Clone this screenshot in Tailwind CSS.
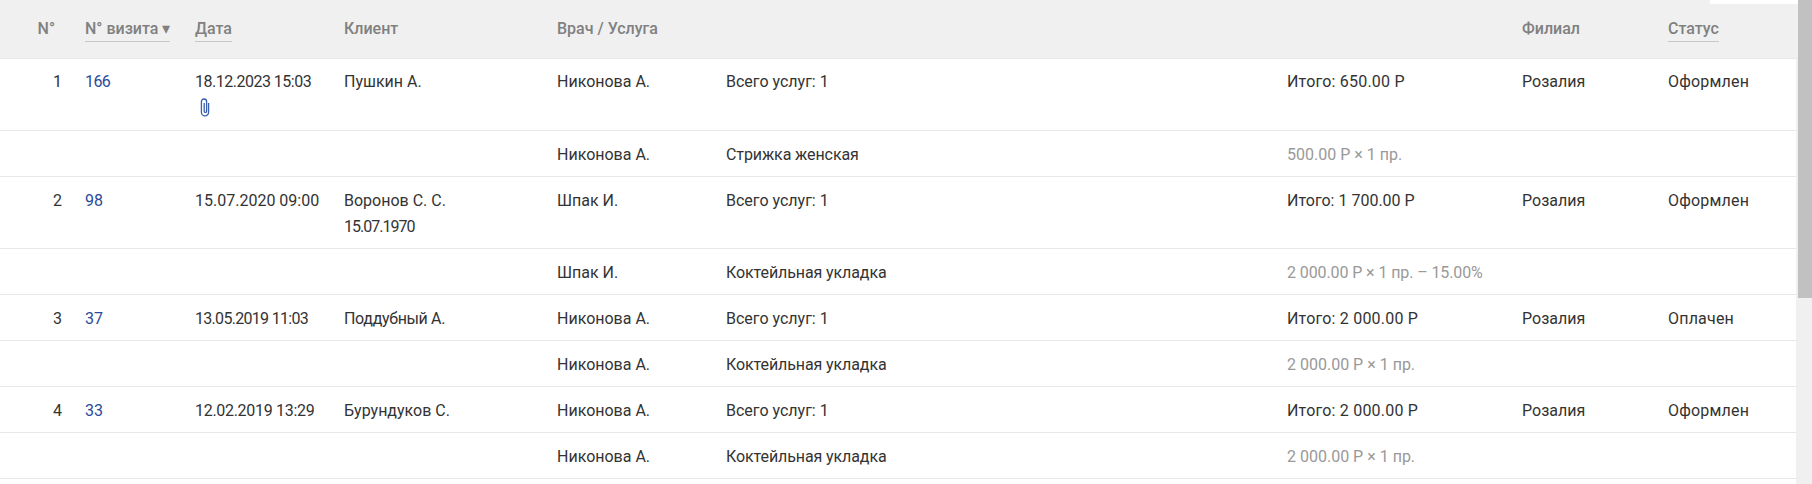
<!DOCTYPE html>
<html lang="ru">
<head>
    <meta charset="UTF-8">
    <title>Визиты</title>
    <script src="https://cdn.jsdelivr.net/npm/@tailwindcss/browser@4"></script>
</head>
<body class="bg-[#f0f0f0] h-[484px] overflow-hidden flex font-['Roboto',sans-serif] text-[16px] leading-[26px] text-[#333]">
    <div class="relative w-[1798px] shrink-0 pr-[2px]">
        <div class="absolute top-0 left-[1710px] w-[88px] h-1 bg-white"></div>
        <table class="w-full table-fixed border-collapse">
            <colgroup>
                <col class="w-[85px]">
                <col class="w-[110px]">
                <col class="w-[149px]">
                <col class="w-[213px]">
                <col class="w-[169px]">
                <col class="w-[561px]">
                <col class="w-[235px]">
                <col class="w-[146px]">
                <col>
            </colgroup>
            <thead class="text-[#808080]">
                <tr class="h-[58px] border-b border-[#e8e8e8]">
                    <th class="pr-[30px] text-right font-medium">N°</th>
                    <th class="text-left font-medium"><span class="border-b border-[#c8c8c8] pb-[3px]">N° визита ▾</span></th>
                    <th class="text-left font-medium"><span class="border-b border-[#c8c8c8] pb-[3px]">Дата</span></th>
                    <th class="text-left font-medium">Клиент</th>
                    <th class="text-left font-medium" colspan="3">Врач / Услуга</th>
                    <th class="text-left font-medium">Филиал</th>
                    <th class="text-left font-medium"><span class="border-b border-[#c8c8c8] pb-[3px]">Статус</span></th>
                </tr>
            </thead>
            <tbody class="bg-white">
                <tr class="h-[72px] border-b border-[#e8e8e8] align-top">
                    <td class="pt-[10px] pr-[23px] text-right">1</td>
                    <td class="pt-[10px] text-[#2a4a9a] tracking-[-0.6px]">166</td>
                    <td class="pt-[10px]">
                        <div class="tracking-[-0.5px]">18.12.2023 15:03</div>
                        <svg class="mt-[3px] ml-[4px]" width="12" height="19" viewBox="0 0 12 19" fill="none" stroke="#3a5fae" stroke-width="1.3"><path d="M9.6 5v9.2a3.6 3.6 0 0 1-7.2 0V3.6a2.6 2.6 0 0 1 5.2 0v9.6a1.2 1.2 0 0 1-2.4 0V5"/></svg>
                    </td>
                    <td class="pt-[10px]">Пушкин А.</td>
                    <td class="pt-[10px]">Никонова А.</td>
                    <td class="pt-[10px]">Всего услуг: 1</td>
                    <td class="pt-[10px] tracking-[0.2px]">Итого: 650.00 Р</td>
                    <td class="pt-[10px]">Розалия</td>
                    <td class="pt-[10px] tracking-[0.2px]">Оформлен</td>
                </tr>
                <tr class="h-[46px] border-b border-[#e8e8e8]">
                    <td colspan="4"></td>
                    <td class="pt-[4px]">Никонова А.</td>
                    <td class="pt-[4px] tracking-[-0.1px]">Стрижка женская</td>
                    <td class="pt-[4px] text-[#999]" colspan="3">500.00 Р × 1 пр.</td>
                </tr>
                <tr class="h-[72px] border-b border-[#e8e8e8] align-top">
                    <td class="pt-[11px] pr-[23px] text-right">2</td>
                    <td class="pt-[11px] text-[#2a4a9a]">98</td>
                    <td class="pt-[11px]">15.07.2020 09:00</td>
                    <td class="pt-[11px]">Воронов С. С.<br><span class="tracking-[-1px]">15.07.1970</span></td>
                    <td class="pt-[11px]">Шпак И.</td>
                    <td class="pt-[11px]">Всего услуг: 1</td>
                    <td class="pt-[11px]">Итого: 1 700.00 Р</td>
                    <td class="pt-[11px]">Розалия</td>
                    <td class="pt-[11px] tracking-[0.2px]">Оформлен</td>
                </tr>
                <tr class="h-[46px] border-b border-[#e8e8e8]">
                    <td colspan="4"></td>
                    <td class="pt-[4px]">Шпак И.</td>
                    <td class="pt-[4px] tracking-[-0.1px]">Коктейльная укладка</td>
                    <td class="pt-[4px] text-[#999] tracking-[-0.1px]" colspan="3">2 000.00 Р × 1 пр. – 15.00%</td>
                </tr>
                <tr class="h-[46px] border-b border-[#e8e8e8]">
                    <td class="pt-[4px] pr-[23px] text-right">3</td>
                    <td class="pt-[4px] text-[#2a4a9a]">37</td>
                    <td class="pt-[4px] tracking-[-0.7px]">13.05.2019 11:03</td>
                    <td class="pt-[4px] tracking-[-0.35px]">Поддубный А.</td>
                    <td class="pt-[4px]">Никонова А.</td>
                    <td class="pt-[4px]">Всего услуг: 1</td>
                    <td class="pt-[4px] tracking-[0.2px]">Итого: 2 000.00 Р</td>
                    <td class="pt-[4px]">Розалия</td>
                    <td class="pt-[4px] tracking-[0.2px]">Оплачен</td>
                </tr>
                <tr class="h-[46px] border-b border-[#e8e8e8]">
                    <td colspan="4"></td>
                    <td class="pt-[4px]">Никонова А.</td>
                    <td class="pt-[4px] tracking-[-0.1px]">Коктейльная укладка</td>
                    <td class="pt-[4px] text-[#999]" colspan="3">2 000.00 Р × 1 пр.</td>
                </tr>
                <tr class="h-[46px] border-b border-[#e8e8e8]">
                    <td class="pt-[4px] pr-[23px] text-right">4</td>
                    <td class="pt-[4px] text-[#2a4a9a]">33</td>
                    <td class="pt-[4px] tracking-[-0.3px]">12.02.2019 13:29</td>
                    <td class="pt-[4px]">Бурундуков С.</td>
                    <td class="pt-[4px]">Никонова А.</td>
                    <td class="pt-[4px]">Всего услуг: 1</td>
                    <td class="pt-[4px] tracking-[0.2px]">Итого: 2 000.00 Р</td>
                    <td class="pt-[4px]">Розалия</td>
                    <td class="pt-[4px] tracking-[0.2px]">Оформлен</td>
                </tr>
                <tr class="h-[46px] border-b border-[#e8e8e8]">
                    <td colspan="4"></td>
                    <td class="pt-[4px]">Никонова А.</td>
                    <td class="pt-[4px] tracking-[-0.1px]">Коктейльная укладка</td>
                    <td class="pt-[4px] text-[#999]" colspan="3">2 000.00 Р × 1 пр.</td>
                </tr>
                <tr class="h-[10px]"><td colspan="9"></td></tr>
            </tbody>
        </table>
    </div>
    <div class="flex-1">
        <div class="h-[298px] bg-[#c1c1c1]"></div>
    </div>
</body>
</html>
